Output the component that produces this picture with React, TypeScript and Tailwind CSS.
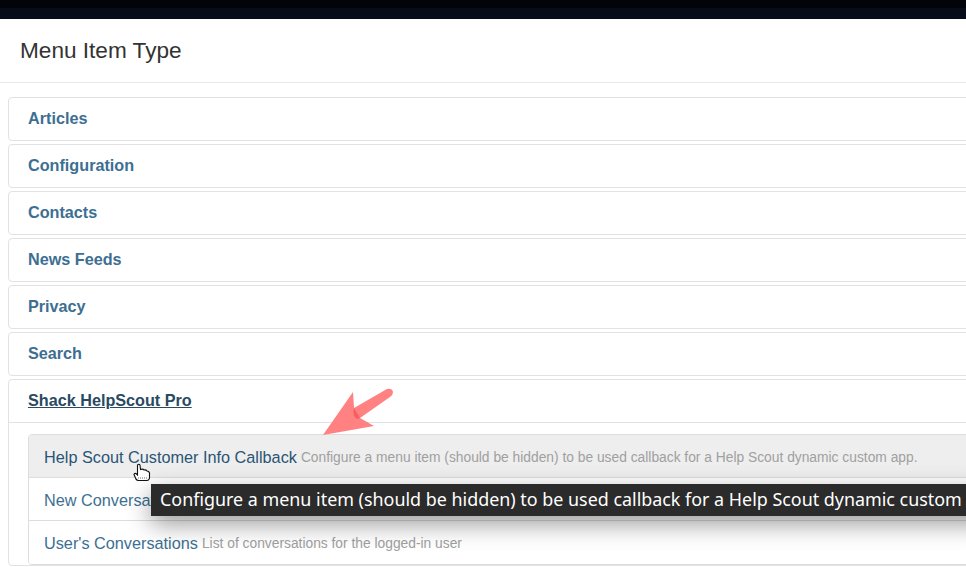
import React from "react";

const groups = ["Articles", "Configuration", "Contacts", "News Feeds", "Privacy", "Search"];

function Row({ title, desc, active }: { title: string; desc: string; active?: boolean }) {
  return (
    <div
      className={
        "flex h-[43px] items-center gap-[4px] whitespace-nowrap border-b border-[#dddddd] pl-[15px] pt-[2px] last:border-b-0 " +
        (active ? "bg-[#eeeeee]" : "bg-white")
      }
    >
      <span className={"text-[16.25px] " + (active ? "text-[#2a5475]" : "text-[#3d6f92]")}>{title}</span>
      <span className="pt-[2px] text-[13.8px] text-[#a0a0a0]">{desc}</span>
    </div>
  );
}

function Arrow() {
  return (
    <svg className="absolute left-[320px] top-[386px]" width="76" height="52" viewBox="0 0 76 52">
      <path d="M3 49 L33 6 L34 22 L67 3 Q72 2 73 6 Q73 9 70 11 L40 32 L54 40 Z" fill="#ff8181" />
      <path d="M34 22 L40 32 L37 33 Q32 30 34 22 Z" fill="#f45f5f" />
    </svg>
  );
}

function HandCursor() {
  return (
    <svg className="absolute left-[133px] top-[463px]" width="18" height="19" viewBox="0 0 18 19">
      <path
        d="M4.500 2 Q6 0.500 7 2 L7.500 6.500 Q10 5.500 11 7 Q13 6.500 14 8 Q16 8 16.500 10 L16.500 15 Q16 17.500 14 17.500 L5 17.500 Q3 17 2.500 15 L1 11.500 Q1.500 10 3 10.500 L4.500 12 Z"
        fill="#ffffff"
        stroke="#111111"
        strokeWidth="1.100"
      />
      <path d="M5 15 H14" stroke="#777777" strokeWidth="1" strokeDasharray="1 1" />
    </svg>
  );
}

export default function App() {
  return (
    <div className="relative h-[567px] w-[966px] overflow-hidden bg-white font-['Liberation_Sans',Arial,sans-serif]">
      <div className="h-[19px] border-t-[8px] border-[#02040a] bg-[#060c18]" />

      <div className="flex h-[64px] items-center border-b border-[#e8e8e8] pl-[20px]">
        <h3 className="text-[22.6px] font-normal text-[#333333]">Menu Item Type</h3>
      </div>

      <div className="flex w-[1000px] flex-col gap-[3px] pl-[8px] pt-[14px]">
        {groups.map((g) => (
          <div key={g} className="flex h-[44px] items-center rounded-[4px] border border-[#e2e2e2] pb-[2px] pl-[19px]">
            <span className="text-[16.2px] font-bold text-[#3d6f92]">{g}</span>
          </div>
        ))}

        <div className="rounded-[4px] border border-[#e2e2e2]">
          <div className="flex h-[43px] items-center border-b border-[#e2e2e2] pb-[2px] pl-[19px]">
            <span className="text-[16.2px] font-bold text-[#2a4a62] underline">Shack HelpScout Pro</span>
          </div>
          <div className="pl-[19px] pt-[11px]">
            <div className="overflow-hidden rounded-[4px] border border-[#dddddd]">
              <Row
                active
                title="Help Scout Customer Info Callback"
                desc="Configure a menu item (should be hidden) to be used callback for a Help Scout dynamic custom app."
              />
              <Row title="New Conversation" desc="" />
              <Row title="User's Conversations" desc="List of conversations for the logged-in user" />
            </div>
          </div>
        </div>
      </div>

      <Arrow />
      <HandCursor />

      <div className="absolute left-[151px] top-[484px] flex h-[32px] w-[840px] items-center overflow-hidden whitespace-nowrap bg-[#2b2b2b] pb-[1px] pl-[9px] font-['Noto_Sans',sans-serif] text-[17.9px] text-white shadow-[0_8px_25px_rgba(0,0,0,0.4)]">
        Configure a menu item (should be hidden) to be used callback for a Help Scout dynamic custom app.
      </div>
    </div>
  );
}
